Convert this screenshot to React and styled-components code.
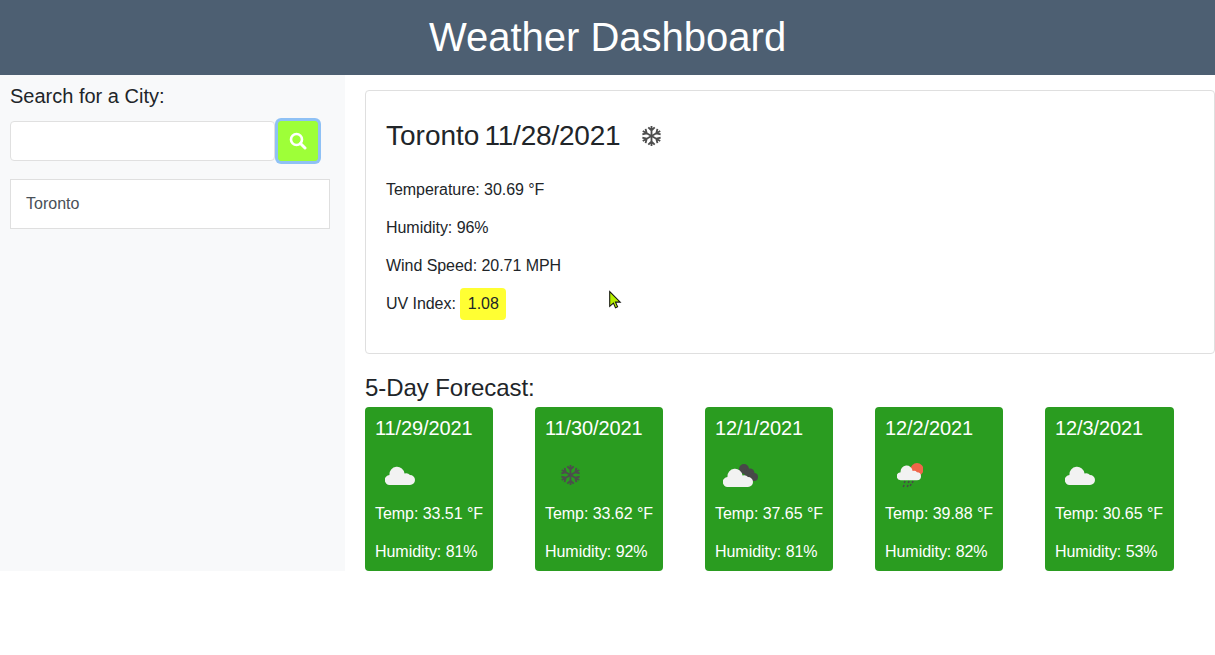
import React from 'react';
import styled, { createGlobalStyle } from 'styled-components';

const GlobalStyle = createGlobalStyle`
  html, body {
    margin: 0;
    padding: 0;
    background: #ffffff;
  }
  body {
    font-family: "Liberation Sans", Arial, sans-serif;
    font-size: 16px;
    line-height: 24px;
    color: #212529;
  }
  * {
    box-sizing: border-box;
  }
`;

const Page = styled.div`
  position: relative;
  width: 1215px;
  height: 655px;
  overflow: hidden;
`;

const Header = styled.header`
  height: 75px;
  padding-bottom: 2px;
  background: #4d5f72;
  color: #ffffff;
  display: flex;
  align-items: center;
  justify-content: center;
  font-size: 40px;
  line-height: 48px;
`;

const Body = styled.div`
  display: flex;
  height: 496px;
`;

const Sidebar = styled.aside`
  flex: 0 0 345px;
  background: #f8f9fa;
  padding: 9px 15px 0 10px;
`;

const SearchLabel = styled.div`
  font-size: 20px;
  line-height: 24px;
  margin-bottom: 13px;
`;

const SearchRow = styled.div`
  display: flex;
  align-items: center;
  height: 40px;
  margin-bottom: 18px;
`;

const SearchInput = styled.input`
  width: 265px;
  height: 40px;
  border: 1px solid #e0e0e0;
  border-radius: 4px;
  background: #ffffff;
  outline: none;
`;

const SearchButton = styled.button`
  width: 40px;
  height: 40px;
  margin-left: 3px;
  padding: 0;
  border: 1px solid #9eff38;
  border-radius: 3px;
  background: #9eff38;
  box-shadow: 0 0 0 3px #8fc1f5;
  display: flex;
  align-items: center;
  justify-content: center;
`;

const CityItem = styled.div`
  height: 50px;
  padding: 12px 15px;
  background: #ffffff;
  border: 1px solid #dfdfdf;
  color: #495057;
`;

const Main = styled.main`
  flex: 1;
  min-width: 0;
  padding: 15px 0 0 20px;
`;

const CurrentCard = styled.section`
  height: 264px;
  padding: 20px;
  border: 1px solid #dfdfdf;
  border-radius: 4px;
  background: #ffffff;
  margin-bottom: 21px;
`;

const CurrentTitle = styled.div`
  display: flex;
  align-items: center;
  height: 50px;
  font-size: 28px;
  line-height: 34px;
  margin-bottom: 17px;
`;

const CityName = styled.span`
  margin-right: 5px;
`;

const TitleDate = styled.span`
  letter-spacing: -0.2px;
`;

const TitleIcon = styled.span`
  display: flex;
  margin-left: 21px;
`;

const Stat = styled.p`
  margin: 0 0 14px;
  letter-spacing: -0.05px;
`;

const UvValue = styled.span`
  display: inline-block;
  width: 46px;
  height: 32px;
  margin: -4px 0 -4px 4px;
  padding: 4px 0 4px 8px;
  background: #ffff33;
  border-radius: 4px;
  vertical-align: top;
`;

const ForecastTitle = styled.div`
  font-size: 24px;
  line-height: 29px;
  height: 22px;
  margin-top: -2px;
  margin-bottom: 12px;
  letter-spacing: -0.07px;
`;

const ForecastRow = styled.div`
  display: flex;
`;

const DayCard = styled.div`
  flex: 0 0 ${(p) => p.$width}px;
  min-width: 0;
  margin-right: 42px;
  height: 164px;
  padding: 9px 10px 0;
  background: #2a9c20;
  border-radius: 4px;
  color: #ffffff;
`;

const DayDate = styled.div`
  font-size: 20px;
  line-height: 24px;
  height: 24px;
  letter-spacing: -0.1px;
`;

const DayIcon = styled.div`
  height: 50px;
  width: 50px;
  margin: 10px 0 2px;
  display: flex;
  align-items: center;
  justify-content: center;
`;

const DayLine = styled.p`
  margin: 0 0 14px;
  white-space: nowrap;
  letter-spacing: -0.05px;
`;

const Pointer = styled.svg`
  position: absolute;
  left: 608px;
  top: 290px;
`;

const SearchIcon = () => (
  <svg width="18" height="18" viewBox="0 0 18 18" fill="none">
    <circle cx="7.500" cy="7.500" r="5.500" stroke="#fff" strokeWidth="2.600" />
    <path d="M11.500 11.500 L16 16" stroke="#fff" strokeWidth="3" strokeLinecap="round" />
  </svg>
);

const flakeArm = 'M11 1v22M7.500 2.500 11 6l3.500-3.500M7.500 21.500 11 18l3.500 3.500';

const Snowflake = () => (
  <svg width="21" height="22" viewBox="0 0 22 24" fill="none" stroke="#4d4d4d" strokeWidth="2">
    <path d={flakeArm} />
    <path d={flakeArm} transform="rotate(60 11 12)" />
    <path d={flakeArm} transform="rotate(120 11 12)" />
  </svg>
);

const cloudPath =
  'M5 19a5 5 0 0 1-.5-10A7.500 7.500 0 0 1 19.500 7.500 5 5 0 0 1 25 9a5 5 0 0 1 0 10z';

const Cloud = () => (
  <svg width="30" height="19" viewBox="0 0 30 19">
    <path d={cloudPath} fill="#f2f2f2" />
  </svg>
);

const BrokenClouds = () => (
  <svg width="35" height="23" viewBox="0 0 35 23">
    <circle cx="21" cy="5" r="5" fill="#484848" />
    <circle cx="27" cy="9" r="4.500" fill="#484848" />
    <circle cx="31" cy="13" r="4" fill="#484848" />
    <path d="M21 5l6 4 4 8H22z" fill="#484848" />
    <path d={cloudPath} fill="#f2f2f2" transform="translate(0 4)" />
  </svg>
);

const RainSun = () => (
  <svg width="26" height="25" viewBox="0 0 26 25">
    <circle cx="20" cy="6.500" r="6.500" fill="#f0664a" />
    <path d={cloudPath} fill="#f2f2f2" transform="translate(0 2) scale(.8)" />
    <path
      d="M8 18l-.7 2M12 18l-.7 2M16 18l-.7 2M7 22l-.7 2M11 22l-.7 2M14 21l-.7 2"
      stroke="#484848"
      strokeWidth="1.500"
    />
  </svg>
);

const days = [
  { date: '11/29/2021', temp: '33.51', humidity: '81', icon: <Cloud />, width: 128 },
  { date: '11/30/2021', temp: '33.62', humidity: '92', icon: <Snowflake />, width: 128 },
  { date: '12/1/2021', temp: '37.65', humidity: '81', icon: <BrokenClouds />, width: 128 },
  { date: '12/2/2021', temp: '39.88', humidity: '82', icon: <RainSun />, width: 128 },
  { date: '12/3/2021', temp: '30.65', humidity: '53', icon: <Cloud />, width: 129 },
];

export default function App() {
  return (
    <Page>
      <GlobalStyle />
      <Header>Weather Dashboard</Header>
      <Body>
        <Sidebar>
          <SearchLabel>Search for a City:</SearchLabel>
          <SearchRow>
            <SearchInput />
            <SearchButton>
              <SearchIcon />
            </SearchButton>
          </SearchRow>
          <CityItem>Toronto</CityItem>
        </Sidebar>
        <Main>
          <CurrentCard>
            <CurrentTitle>
              <CityName>Toronto</CityName>
              <TitleDate>11/28/2021</TitleDate>
              <TitleIcon>
                <Snowflake />
              </TitleIcon>
            </CurrentTitle>
            <Stat>Temperature: 30.69 °F</Stat>
            <Stat>Humidity: 96%</Stat>
            <Stat>Wind Speed: 20.71 MPH</Stat>
            <Stat>
              UV Index:<UvValue>1.08</UvValue>
            </Stat>
          </CurrentCard>
          <ForecastTitle>5-Day Forecast:</ForecastTitle>
          <ForecastRow>
            {days.map((d) => (
              <DayCard key={d.date} $width={d.width}>
                <DayDate>{d.date}</DayDate>
                <DayIcon>{d.icon}</DayIcon>
                <DayLine>Temp: {d.temp} °F</DayLine>
                <DayLine>Humidity: {d.humidity}%</DayLine>
              </DayCard>
            ))}
          </ForecastRow>
        </Main>
      </Body>
      <Pointer width="15" height="20" viewBox="0 0 14 19">
        <path d="M1.500 1.500v14l3.500-3 2 4.500 2-1-2-4.500h4.500z" fill="#b6f000" stroke="#111" strokeWidth="1" />
      </Pointer>
    </Page>
  );
}
